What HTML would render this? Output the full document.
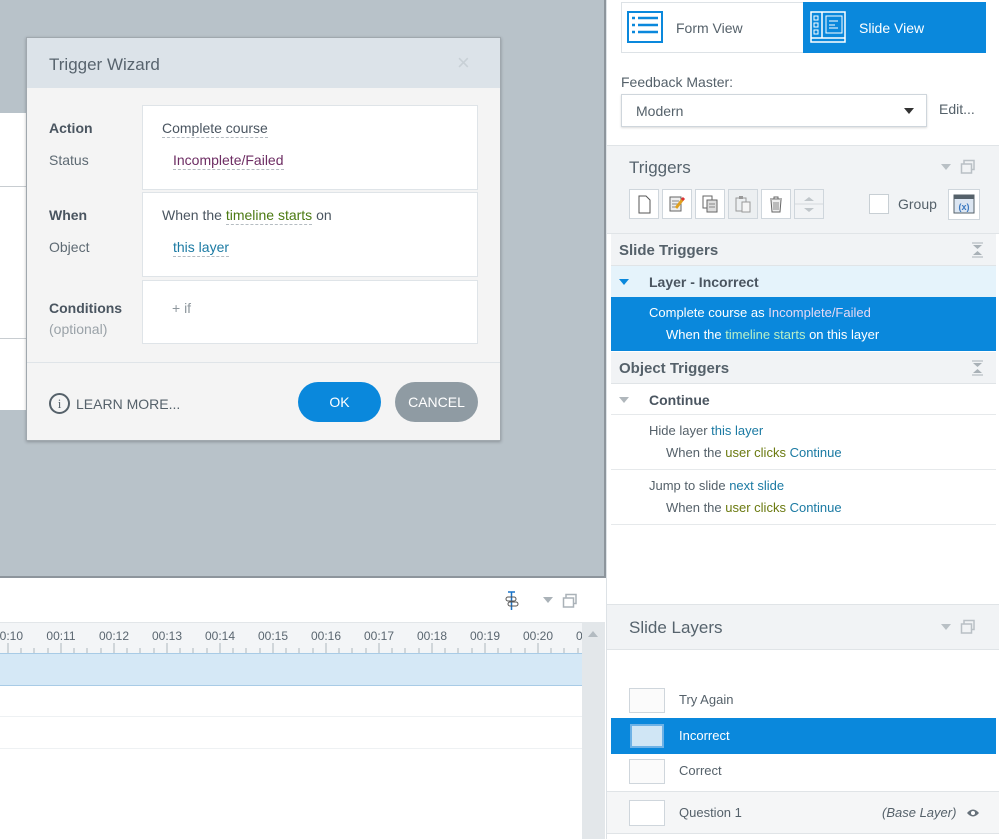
<!DOCTYPE html>
<html><head><meta charset="utf-8">
<style>
*{box-sizing:border-box;margin:0;padding:0}
body{width:999px;height:839px;overflow:hidden;background:#fff;font-family:"Liberation Sans",sans-serif;color:#4a5560;position:relative;font-size:14px}
.a{position:absolute}
.dot{border-bottom:1px dashed #b5bcc2;padding-bottom:1px}
.ib{position:absolute;width:30px;height:30px;border:1px solid #cfd6dc;background:#fff}
.hd{font-size:17px;color:#56636d}
.row{position:absolute;left:611px;width:385px}
</style></head><body>
<!-- canvas -->
<div class="a" style="left:0;top:0;width:606px;height:578px;background:#b8c2c9;border-right:2px solid #8d959c;border-bottom:2px solid #8d959c"></div>
<div class="a" style="left:0;top:113px;width:26px;height:297px;background:#fff"></div>
<div class="a" style="left:0;top:186px;width:26px;height:1px;background:#c8cdd1"></div>
<div class="a" style="left:0;top:338px;width:26px;height:1px;background:#c8cdd1"></div>

<!-- dialog -->
<div class="a" style="left:26px;top:37px;width:475px;height:404px;background:#f4f4f4;border:1px solid #a0a8ae;box-shadow:0 1px 3px rgba(0,0,0,.25)">
  <div class="a" style="left:0;top:0;width:473px;height:50px;background:#dce3e9"></div>
  <div class="a" style="left:22px;top:17px;font-size:17px;color:#58646e">Trigger Wizard</div>
  <div class="a" style="left:430px;top:12px;font-size:22px;color:#c8d0d6">×</div>
  <div class="a" style="left:22px;top:82px;font-weight:bold;font-size:14px">Action</div>
  <div class="a" style="left:22px;top:114px;color:#5e6a73">Status</div>
  <div class="a" style="left:22px;top:169px;font-weight:bold">When</div>
  <div class="a" style="left:22px;top:201px;color:#5e6a73">Object</div>
  <div class="a" style="left:22px;top:262px;font-weight:bold">Conditions</div>
  <div class="a" style="left:22px;top:283px;color:#9aa2a8">(optional)</div>
  <div class="a" style="left:115px;top:67px;width:336px;height:85px;background:#fff;border:1px solid #dfe4e8"></div>
  <div class="a" style="left:115px;top:154px;width:336px;height:85px;background:#fff;border:1px solid #dfe4e8"></div>
  <div class="a" style="left:115px;top:242px;width:336px;height:64px;background:#fff;border:1px solid #dfe4e8"></div>
  <div class="a" style="left:135px;top:82px"><span class="dot">Complete course</span></div>
  <div class="a" style="left:146px;top:114px;color:#6d2d63"><span class="dot">Incomplete/Failed</span></div>
  <div class="a" style="left:135px;top:169px">When the <span class="dot" style="color:#4b7a12">timeline starts</span> on</div>
  <div class="a" style="left:146px;top:201px;color:#1b7aa3"><span class="dot">this layer</span></div>
  <div class="a" style="left:145px;top:262px;color:#8e979d">+ if</div>
  <div class="a" style="left:0;top:324px;width:473px;height:1px;background:#dfe4e8"></div>
  <div class="a" style="left:22px;top:355px;width:21px;height:21px;border:2px solid #55616a;border-radius:50%;font-size:13px;text-align:center;line-height:17px;font-family:'Liberation Serif',serif;color:#55616a">i</div>
  <div class="a" style="left:49px;top:358px;font-size:14px;color:#55616a">LEARN MORE...</div>
  <div class="a" style="left:271px;top:344px;width:83px;height:40px;border-radius:20px;background:#0a88dc;color:#fff;text-align:center;line-height:40px;font-size:14px">OK</div>
  <div class="a" style="left:368px;top:344px;width:83px;height:40px;border-radius:20px;background:#8f9ba3;color:#fff;text-align:center;line-height:40px;font-size:14px">CANCEL</div>
</div>

<!-- timeline -->
<div class="a" style="left:504px;top:591px;width:16px;height:20px">
 <svg width="16" height="20"><path d="M4 1h7M7.5 1v18" stroke="#1a74c8" stroke-width="1.5"/><rect x="2" y="6" width="10" height="4" rx="2" fill="none" stroke="#555"/><rect x="4" y="11" width="10" height="4" rx="2" fill="none" stroke="#555"/></svg>
</div>
<div class="a" style="left:543px;top:597px;width:0;height:0;border-left:5px solid transparent;border-right:5px solid transparent;border-top:6px solid #aab2b8"></div>
<svg class="a" style="left:562px;top:593px" width="16" height="16"><rect x="4" y="1.5" width="10" height="9" fill="none" stroke="#aab2b8" stroke-width="1.5"/><rect x="1.5" y="5" width="10" height="9" fill="#fff" stroke="#aab2b8" stroke-width="1.5"/></svg>
<div class="a" style="left:0;top:622px;width:582px;height:31px;background:#f3f5f7;border-top:1px solid #e2e6e9"></div>
<div class="a" style="left:582px;top:622px;width:23px;height:217px;background:#e3e7ea"></div>
<div class="a" style="left:588px;top:631px;width:0;height:0;border-left:5px solid transparent;border-right:5px solid transparent;border-bottom:6px solid #b3bbc1"></div>
<div class="a" style="left:0;top:653px;width:582px;height:33px;background:#d5e8f6;border-top:1px solid #a8cbe6;border-bottom:1px solid #a8cbe6"></div>
<div class="a" style="left:0;top:716px;width:582px;height:1px;background:#eef1f3"></div>
<div class="a" style="left:0;top:748px;width:582px;height:1px;background:#eef1f3"></div>
<svg class="a" style="left:0;top:626px" width="582" height="27">
<g font-family="Liberation Sans" font-size="12" fill="#5a6670" text-anchor="middle">
<text x="8" y="14">00:10</text><text x="61" y="14">00:11</text><text x="114" y="14">00:12</text><text x="167" y="14">00:13</text><text x="220" y="14">00:14</text><text x="273" y="14">00:15</text><text x="326" y="14">00:16</text><text x="379" y="14">00:17</text><text x="432" y="14">00:18</text><text x="485" y="14">00:19</text><text x="538" y="14">00:20</text><text x="591" y="14">00:21</text>
</g>
<g stroke="#aeb6bc">
<path d="M8 17v10M61 17v10M114 17v10M167 17v10M220 17v10M273 17v10M326 17v10M379 17v10M432 17v10M485 17v10M538 17v10"/>
<path d="M21 22v5M34 22v5M48 22v5M74 22v5M87 22v5M101 22v5M127 22v5M140 22v5M154 22v5M180 22v5M193 22v5M207 22v5M233 22v5M246 22v5M260 22v5M286 22v5M299 22v5M313 22v5M339 22v5M352 22v5M366 22v5M392 22v5M405 22v5M419 22v5M445 22v5M458 22v5M472 22v5M498 22v5M511 22v5M525 22v5M551 22v5M564 22v5M578 22v5"/>
</g></svg>

<!-- right panel -->
<div class="a" style="left:606px;top:0;width:1px;height:839px;background:#dde2e6"></div>
<div class="a" style="left:621px;top:2px;width:183px;height:51px;border:1px solid #dde2e6;background:#fff"></div>
<svg class="a" style="left:627px;top:11px" width="36" height="32"><rect x="1" y="1" width="34" height="30" fill="none" stroke="#0a88dc" stroke-width="2"/><path d="M5 7h3M11 7h20M5 14h3M11 14h20M5 21h3M11 21h20" stroke="#0a88dc" stroke-width="2.5"/></svg>
<div class="a" style="left:676px;top:20px;color:#55616a">Form View</div>
<div class="a" style="left:803px;top:2px;width:183px;height:51px;background:#0a88dc"></div>
<svg class="a" style="left:810px;top:11px" width="36" height="32"><rect x="1" y="1" width="34" height="30" fill="none" stroke="#fff" stroke-width="1.5"/><path d="M12 1v26M1 27h34" stroke="#fff" stroke-width="1.5"/><rect x="4" y="5" width="4" height="4" fill="none" stroke="#fff"/><rect x="4" y="12" width="4" height="4" fill="none" stroke="#fff"/><rect x="4" y="19" width="4" height="4" fill="none" stroke="#fff"/><rect x="16" y="5" width="16" height="17" fill="none" stroke="#fff"/><path d="M19 10h9M19 14h6M19 17h9" stroke="#fff"/></svg>
<div class="a" style="left:859px;top:20px;color:#fff">Slide View</div>
<div class="a" style="left:621px;top:74px;color:#55616a">Feedback Master:</div>
<div class="a" style="left:621px;top:94px;width:306px;height:33px;border:1px solid #cfd6dc;box-shadow:0 1px 2px rgba(0,0,0,.15);background:#fff"></div>
<div class="a" style="left:636px;top:103px;color:#55616a">Modern</div>
<div class="a" style="left:904px;top:108px;border-left:5px solid transparent;border-right:5px solid transparent;border-top:6px solid #333"></div>
<div class="a" style="left:939px;top:101px;color:#55616a">Edit...</div>

<div class="a" style="left:607px;top:145px;width:392px;height:89px;background:#f1f3f5;border-top:1px solid #e0e4e7;border-bottom:1px solid #e0e4e7"></div>
<div class="a hd" style="left:629px;top:158px">Triggers</div>
<div class="a" style="left:941px;top:164px;border-left:5px solid transparent;border-right:5px solid transparent;border-top:6px solid #b9c0c5"></div>
<svg class="a" style="left:960px;top:159px" width="16" height="16"><rect x="4" y="1.5" width="10" height="9" fill="none" stroke="#b9c0c5" stroke-width="1.5"/><rect x="1.5" y="5" width="10" height="9" fill="#f1f3f5" stroke="#b9c0c5" stroke-width="1.5"/></svg>
<div class="ib" style="left:629px;top:189px"><svg width="28" height="28"><path d="M9 6h7l4 4v13H9z" fill="#fff" stroke="#555"/></svg></div>
<div class="ib" style="left:662px;top:189px"><svg width="28" height="28"><rect x="7" y="7" width="11" height="14" fill="#eee" stroke="#666"/><path d="M9 11h7M9 14h7M9 17h5" stroke="#888"/><path d="M13 18l7-9" stroke="#e0a020" stroke-width="3"/><path d="M19 10l2-2" stroke="#d33" stroke-width="3"/></svg></div>
<div class="ib" style="left:695px;top:189px"><svg width="28" height="28"><rect x="7" y="6" width="9" height="12" fill="#fff" stroke="#666"/><rect x="11" y="10" width="10" height="12" fill="#ddd" stroke="#666"/><path d="M13 14h6M13 17h6" stroke="#888"/></svg></div>
<div class="ib" style="left:728px;top:189px;background:#eceff1"><svg width="28" height="28"><rect x="7" y="8" width="10" height="13" fill="none" stroke="#999"/><rect x="13" y="12" width="8" height="10" fill="#f5f5f5" stroke="#999"/><rect x="10" y="6" width="4" height="3" fill="#999"/></svg></div>
<div class="ib" style="left:761px;top:189px"><svg width="28" height="28"><path d="M8 9h12M12 9V7h4v2" stroke="#666" fill="none"/><path d="M9 10l1 12h8l1-12" fill="#eee" stroke="#666"/><path d="M12 12v8M14 12v8M16 12v8" stroke="#888"/></svg></div>
<div class="ib" style="left:794px;top:189px;background:#f1f3f5"><svg width="28" height="28"><path d="M9 11l5-4 5 4z" fill="#c0c6ca"/><path d="M0 14h30" stroke="#d5dadd"/><path d="M9 18l5 4 5-4z" fill="#c0c6ca"/></svg></div>
<div class="a" style="left:869px;top:194px;width:20px;height:20px;border:1px solid #c8cfd4;background:#fff"></div>
<div class="a" style="left:898px;top:196px;color:#55616a">Group</div>
<div class="ib" style="left:948px;top:189px;width:32px;height:31px"><svg width="30" height="29"><rect x="5" y="5" width="20" height="18" fill="#dce6f2" stroke="#55616a"/><rect x="5" y="5" width="20" height="4" fill="#55616a"/><text x="15" y="20" font-size="9" text-anchor="middle" fill="#3a78c0" font-family="Liberation Sans" font-weight="bold">(x)</text></svg></div>

<div class="row" style="top:234px;height:32px;background:#f1f3f5;border-bottom:1px solid #e0e4e7"></div>
<div class="a" style="left:619px;top:242px;font-size:15px;font-weight:bold;color:#55616a">Slide Triggers</div>
<svg class="a" style="left:971px;top:242px" width="13" height="16"><path d="M1 1h11M1 15h11" stroke="#a9b1b7"/><path d="M2 3h9l-4.5 4z M2 13h9l-4.5-4z" fill="#a9b1b7"/></svg>
<div class="row" style="top:266px;height:31px;background:#e5f3fb"></div>
<div class="a" style="left:619px;top:279px;border-left:5px solid transparent;border-right:5px solid transparent;border-top:6px solid #0a88dc"></div>
<div class="a" style="left:649px;top:274px;font-weight:bold;color:#4a5560">Layer - Incorrect</div>
<div class="row" style="top:297px;height:54px;background:#0a88dc"></div>
<div class="a" style="left:649px;top:305px;color:#fff;font-size:13px">Complete course as <span style="color:#e6d9f5">Incomplete/Failed</span></div>
<div class="a" style="left:666px;top:327px;color:#fff;font-size:13px">When the <span style="color:#b8f0c8">timeline starts</span> on this layer</div>
<div class="row" style="top:352px;height:32px;background:#f1f3f5;border-bottom:1px solid #e0e4e7"></div>
<div class="a" style="left:619px;top:360px;font-size:15px;font-weight:bold;color:#55616a">Object Triggers</div>
<svg class="a" style="left:971px;top:360px" width="13" height="16"><path d="M1 1h11M1 15h11" stroke="#a9b1b7"/><path d="M2 3h9l-4.5 4z M2 13h9l-4.5-4z" fill="#a9b1b7"/></svg>
<div class="a" style="left:619px;top:397px;border-left:5px solid transparent;border-right:5px solid transparent;border-top:6px solid #b0b7bc"></div>
<div class="a" style="left:649px;top:392px;font-weight:bold;color:#4a5560">Continue</div>
<div class="row" style="top:414px;height:1px;background:#e6e9eb"></div>
<div class="a" style="left:649px;top:423px;font-size:13px;color:#55616a">Hide layer <span style="color:#1b7aa3">this layer</span></div>
<div class="a" style="left:666px;top:445px;font-size:13px;color:#55616a">When the <span style="color:#6b7a10">user clicks</span> <span style="color:#1b7aa3">Continue</span></div>
<div class="row" style="top:469px;height:1px;background:#e6e9eb"></div>
<div class="a" style="left:649px;top:478px;font-size:13px;color:#55616a">Jump to slide <span style="color:#1b7aa3">next slide</span></div>
<div class="a" style="left:666px;top:500px;font-size:13px;color:#55616a">When the <span style="color:#6b7a10">user clicks</span> <span style="color:#1b7aa3">Continue</span></div>
<div class="row" style="top:524px;height:1px;background:#e6e9eb"></div>

<div class="a" style="left:607px;top:604px;width:392px;height:46px;background:#f1f3f5;border-top:1px solid #e0e4e7;border-bottom:1px solid #e0e4e7"></div>
<div class="a hd" style="left:629px;top:618px">Slide Layers</div>
<div class="a" style="left:941px;top:624px;border-left:5px solid transparent;border-right:5px solid transparent;border-top:6px solid #b9c0c5"></div>
<svg class="a" style="left:960px;top:619px" width="16" height="16"><rect x="4" y="1.5" width="10" height="9" fill="none" stroke="#b9c0c5" stroke-width="1.5"/><rect x="1.5" y="5" width="10" height="9" fill="#f1f3f5" stroke="#b9c0c5" stroke-width="1.5"/></svg>
<div class="a" style="left:629px;top:688px;width:36px;height:25px;border:1px solid #cfd6dc;background:#fbfbfb"></div>
<div class="a" style="left:679px;top:692px;font-size:13px;color:#55616a">Try Again</div>
<div class="row" style="top:718px;height:36px;background:#0a88dc"></div>
<div class="a" style="left:630px;top:724px;width:34px;height:24px;background:#d0e6f5;border:2px solid #6db2e6"></div>
<div class="a" style="left:679px;top:728px;font-size:13px;color:#fff">Incorrect</div>
<div class="a" style="left:629px;top:759px;width:36px;height:25px;border:1px solid #cfd6dc;background:#fbfbfb"></div>
<div class="a" style="left:679px;top:763px;font-size:13px;color:#55616a">Correct</div>
<div class="a" style="left:607px;top:791px;width:392px;height:43px;background:#f5f6f7;border-top:1px solid #e0e4e7;border-bottom:1px solid #e0e4e7"></div>
<div class="a" style="left:629px;top:800px;width:36px;height:26px;border:1px solid #cfd6dc;background:#fff"></div>
<div class="a" style="left:679px;top:805px;font-size:13px;color:#55616a">Question 1</div>
<div class="a" style="left:882px;top:805px;font-size:13px;font-style:italic;color:#55616a">(Base Layer)</div>
<svg class="a" style="left:966px;top:808px" width="14" height="10"><path d="M1 5Q7-2 13 5Q7 12 1 5z" fill="#66717a"/><circle cx="7" cy="5" r="2" fill="#fff"/></svg>
</body></html>
